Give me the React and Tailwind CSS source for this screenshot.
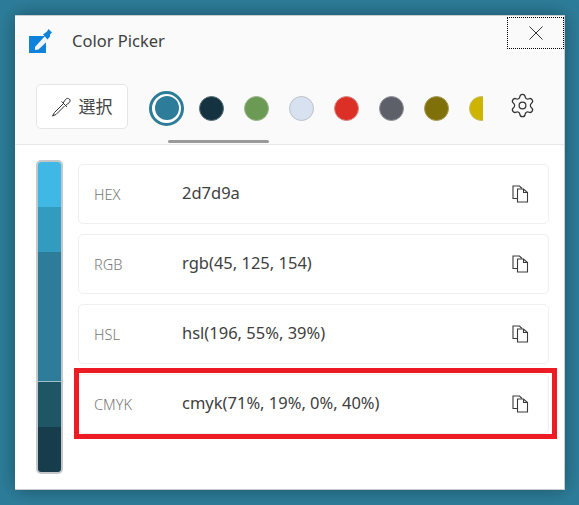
import React from 'react';
import { Settings } from 'lucide-react';

const swatches = [
  { color: 'bg-[#14323f]', border: 'border-[#5a6f78]' },
  { color: 'bg-[#6b9a55]', border: 'border-[#9db48f]' },
  { color: 'bg-[#d7e1f0]', border: 'border-[#bcc2ca]' },
  { color: 'bg-[#dc3027]', border: 'border-[#d98d88]' },
  { color: 'bg-[#5d6068]', border: 'border-[#94969a]' },
  { color: 'bg-[#80700a]', border: 'border-[#a89d5a]' },
  { color: 'bg-[#ccb400]', border: 'border-[#c9bd62]' },
];

const rows = [
  { label: 'HEX', value: '2d7d9a' },
  { label: 'RGB', value: 'rgb(45, 125, 154)' },
  { label: 'HSL', value: 'hsl(196, 55%, 39%)' },
  { label: 'CMYK', value: 'cmyk(71%, 19%, 0%, 40%)', marked: true },
];

const Logo = () => (
  <svg width="26" height="26" viewBox="0 0 26 26">
    <rect x="3" y="8" width="17" height="17" fill="#0f83dc" />
    <path d="M9 19 L19 8 L23 11.5 L12.5 21.5 L9 22 Z" fill="#f3f4f5" />
    <path d="M17 6.5 L21 3.5 L22.5 1 L26 4.5 L24 6.5 L24 8.5 L21.5 11.5 Z" fill="#0f83dc" />
  </svg>
);

const Dropper = () => (
  <svg width="20" height="20" viewBox="0 0 20 20" fill="none" stroke="#333" strokeWidth="1" strokeLinejoin="round">
    <path d="M12 6 L14.5 2.5 C15.5 1.2 17.3 1 18.4 2 C19.5 3.2 19.2 4.8 18 5.8 L14.5 8.5" />
    <path d="M10.5 4.5 L16 10" />
    <path d="M12 7 L3.5 15.5 L1.5 19 L5 17.5 L13.5 9" />
  </svg>
);

const CopyIcon = () => (
  <svg width="17" height="18" viewBox="0 0 17 18" fill="none" stroke="#3a3a3a" strokeWidth="1.1">
    <path d="M5.5 13.5 L1 13.5 L1 1 L7.5 1 L10 3.5" />
    <path d="M5.5 4 L11.5 4 L15.5 7.5 L15.5 17 L5.5 17 Z" />
    <path d="M11.5 4 L11.5 7.5 L15.5 7.5" />
  </svg>
);

const App = () => {
  return (
    <div className="w-[579px] h-[505px] overflow-hidden bg-[#2d7d9a] pt-[15px] pl-[15px] font-['Noto_Sans','Noto_Sans_CJK_JP',sans-serif]">
      <div className="w-[550px] h-[475px] bg-white flex flex-col shadow-[0_0_18px_rgba(0,0,0,0.35)] border-t border-r border-b border-[#c8cccf]">
        {/* Header */}
        <div className="bg-[#fafafa] h-[129px] border-b border-[#e8e8e8] flex flex-col relative">
          <div className="h-[53px] flex justify-between">
            <div className="flex items-center pl-[11px] -mt-[3px]">
              <Logo />
              <span className="ml-[20px] text-[16.5px] text-[#404040]">Color Picker</span>
            </div>
            <button className="mt-[1px] w-[57px] h-[32px] border border-dotted border-black flex items-center justify-center">
              <svg width="16" height="16" viewBox="0 0 16 16" stroke="#333" strokeWidth="1">
                <path d="M1.5 1.5 L14.5 14.5 M14.5 1.5 L1.5 14.5" />
              </svg>
            </button>
          </div>

          <div className="flex items-start pt-[15px] pl-[21px]">
            <button className="w-[92px] h-[45px] bg-white border border-[#e5e5e5] rounded-[5px] flex items-center justify-center gap-[8px] text-[17px] text-[#444] pr-[1px]">
              <Dropper />
              <span>選択</span>
            </button>
            <div className="w-[334px] ml-[21px] flex items-center gap-[20px] overflow-hidden h-[36px] mt-[6px]">
              <div className="shrink-0 w-[35px] h-[35px] -mr-[5px] rounded-full border-[3px] border-[#2d7d9a] bg-white flex items-center justify-center">
                <div className="w-[24px] h-[24px] rounded-full bg-[#2d7d9a]" />
              </div>
              {swatches.map((s, i) => (
                <div key={i} className={`shrink-0 w-[25px] h-[25px] rounded-full border ${s.color} ${s.border}`} />
              ))}
            </div>
            <Settings className="ml-[26px] mt-[8px] w-[27px] h-[27px] text-[#333]" strokeWidth={1.1} />
          </div>

          {/* scroll indicator */}
          <div className="absolute left-[153px] bottom-[1px] w-[101px] h-[3px] rounded-full bg-[#999]" />
        </div>

        {/* Body */}
        <div className="flex pl-[21px] pt-[15px]">
          <div className="w-[27px] h-[314px] rounded-[5px] border-2 border-[#c4c8ca] overflow-hidden flex flex-col shrink-0">
            <div className="h-[45px] bg-[#3fb8e6]" />
            <div className="h-[45px] bg-[#339ac0]" />
            <div className="h-[130px] bg-[#2d7d9a] border-b border-[#9cc0cc]" />
            <div className="h-[45px] bg-[#1f5666]" />
            <div className="flex-1 bg-[#173d4c]" />
          </div>
          <div className="ml-[15px] mt-[4px] w-[471px] flex flex-col gap-[10px]">
            {rows.map((r) => (
              <div key={r.label} className="relative h-[60px] bg-white border border-[#f0f0f0] rounded-[5px] flex items-center pl-[15px] pr-[19px]">
                <span className="w-[88px] text-[14.5px] font-light text-[#777] pt-[2px]">{r.label}</span>
                <span className="flex-1 text-[16.5px] text-[#404040] -mt-[2px]">{r.value}</span>
                <CopyIcon />
                {r.marked && (
                  <div className="absolute -left-[5px] -right-[9px] -top-[7px] -bottom-[6px] border-[5px] border-[#ed1c24]" />
                )}
              </div>
            ))}
          </div>
        </div>
      </div>
    </div>
  );
};

export default App;
